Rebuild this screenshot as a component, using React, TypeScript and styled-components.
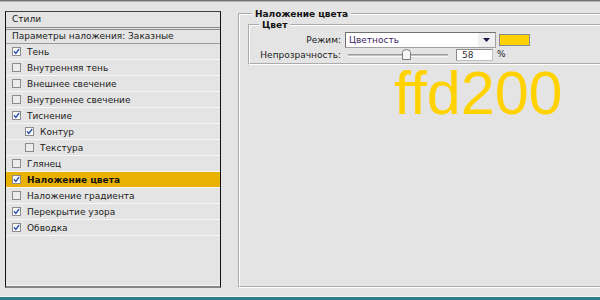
import React from "react";
import styled, { createGlobalStyle } from "styled-components";

const GlobalStyle = createGlobalStyle`
  html, body {
    margin: 0;
    padding: 0;
    background: #e4e4e4;
  }
  body {
    font-family: "DejaVu Sans", Verdana, sans-serif;
    font-size: 9px;
    color: #1c1c1c;
  }
`;

const Page = styled.div`
  width: 600px;
  height: 300px;
  overflow: hidden;
  display: flex;
  flex-direction: column;
  background: #e4e4e4;
`;

const TopRule = styled.div`
  height: 1px;
  border-top: 1px solid #707070;
  background: #b4b4b4;
`;

const Main = styled.div`
  flex: 1;
  min-height: 0;
  display: flex;
  padding: 6px 0 8px 5px;
`;

const BottomRule = styled.div`
  height: 3px;
  border-top: 1px solid #f4f4f4;
  background: #317f89;
`;

/* left: styles list */
const StylesPanel = styled.div`
  width: 214px;
  margin-top: 3px;
  display: flex;
  flex-direction: column;
  border: 1px solid #111;
  border-top-color: #404040;
  border-bottom: 2px solid #858585;
  box-shadow: inset 0 -1px 0 #f6f6f6;
`;

const PanelHeader = styled.div<{ $double?: boolean }>`
  height: ${(p) => (p.$double ? 15 : 13)}px;
  line-height: ${(p) => (p.$double ? 15 : 13)}px;
  padding-left: 6px;
  white-space: nowrap;
  border-bottom: ${(p) => (p.$double ? "3px double #8a8a8a" : "1px solid #9a9a9a")};
`;

const Row = styled.div<{ $active?: boolean; $indent?: boolean }>`
  height: 15px;
  display: flex;
  align-items: center;
  gap: 6px;
  padding-left: ${(p) => (p.$indent ? 19 : 6)}px;
  border-bottom: 1px solid #f7f7f7;
  white-space: nowrap;
  background: ${(p) => (p.$active ? "#e9b200" : "transparent")};
  font-weight: ${(p) => (p.$active ? "bold" : "normal")};
  color: ${(p) => (p.$active ? "#111" : "#1c1c1c")};
`;

const CheckSvg = styled.svg`
  flex: none;
  display: block;
`;

const Check = ({ on }: { on: boolean }) => (
  <CheckSvg width="9" height="9" viewBox="0 0 9 9">
    <rect x="0.5" y="0.5" width="8" height="8" fill={on ? "#fdfdfd" : "#ececec"} stroke="#8c8c8c" />
    {on && <path d="M2 4.3 L3.8 6.4 L7.2 2" fill="none" stroke="#2f4fa8" strokeWidth="1.4" />}
  </CheckSvg>
);

/* right: colour overlay group */
const Group = styled.fieldset`
  flex: 1;
  min-width: 0;
  margin: 0 -4px 0 17px;
  padding: 0 0 0 8px;
  border: 2px groove #ffffff;
  border-right: none;
`;

const SubGroup = styled.fieldset`
  min-width: 0;
  margin: -1px -4px 0 0;
  padding: 1px 0 1px 8px;
  border: 2px groove #ffffff;
  border-right: none;
`;

const Legend = styled.legend<{ $inset: number }>`
  font-weight: bold;
  line-height: 12px;
  padding: 0 3px;
  margin-left: ${(p) => p.$inset}px;
  color: #111;
`;

const Form = styled.div`
  display: grid;
  grid-template-columns: 83px auto;
  column-gap: 4px;
  align-items: center;
`;

const Label = styled.span`
  text-align: right;
  white-space: nowrap;
`;

const ModeRow = styled.div`
  height: 16px;
  display: flex;
  align-items: center;
  gap: 3px;
`;

const Select = styled.div`
  box-sizing: border-box;
  width: 151px;
  height: 16px;
  display: flex;
  align-items: stretch;
  background: #fff;
  border: 1px solid #707070;
  border-right-color: #a0a0a0;
  border-bottom-color: #a0a0a0;
  color: #3b2461;
`;

const SelectText = styled.span`
  flex: 1;
  padding-left: 3px;
  line-height: 14px;
`;

const DropButton = styled.span`
  width: 17px;
  display: flex;
  align-items: center;
  justify-content: center;
  background: #efefef;
`;

const Swatch = styled.div`
  box-sizing: border-box;
  width: 31px;
  height: 12px;
  background: #ffd200;
  border: 1px solid #8a8a8a;
`;

const OpacityRow = styled.div`
  height: 14px;
  display: flex;
  align-items: center;
`;

const Slider = styled.div`
  position: relative;
  width: 108px;
  height: 14px;
  display: flex;
  align-items: center;
`;

const Track = styled.div`
  margin-left: 3px;
  width: 100px;
  height: 1px;
  border-top: 1px solid #9a9a9a;
  border-bottom: 1px solid #fafafa;
  background: #c4c4c4;
`;

const Thumb = styled.svg`
  position: absolute;
  top: 1px;
  display: block;
`;

const NumberBox = styled.div`
  box-sizing: border-box;
  width: 37px;
  height: 12px;
  margin-left: 3px;
  padding-left: 5px;
  line-height: 10px;
  background: #fff;
  border: 1px solid #8c8c8c;
  border-right-color: #c0c0c0;
  border-bottom-color: #c0c0c0;
  color: #333;
`;

const Unit = styled.span`
  margin: -3px 0 0 4px;
`;

const HexLabel = styled.div`
  margin: -2px 0 0 146px;
  font-family: "Liberation Sans", Arial, sans-serif;
  font-size: 61px;
  line-height: 61px;
  color: #ffd200;
`;

const effects = [
  { name: "Тень", on: true },
  { name: "Внутренняя тень", on: false },
  { name: "Внешнее свечение", on: false },
  { name: "Внутреннее свечение", on: false },
  { name: "Тиснение", on: true },
  { name: "Контур", on: true, indent: true },
  { name: "Текстура", on: false, indent: true },
  { name: "Глянец", on: false },
  { name: "Наложение цвета", on: true, active: true },
  { name: "Наложение градиента", on: false },
  { name: "Перекрытие узора", on: true },
  { name: "Обводка", on: true },
];

const opacity = 58;

export default function App() {
  return (
    <>
      <GlobalStyle />
      <Page>
        <TopRule />
        <Main>
          <StylesPanel>
            <PanelHeader $double>Стили</PanelHeader>
            <PanelHeader>Параметры наложения: Заказные</PanelHeader>
            {effects.map((e) => (
              <Row key={e.name} $active={e.active} $indent={e.indent}>
                <Check on={e.on} />
                {e.name}
              </Row>
            ))}
          </StylesPanel>

          <Group>
            <Legend $inset={4}>Наложение цвета</Legend>
            <SubGroup>
              <Legend $inset={1}>Цвет</Legend>
              <Form>
                <Label>Режим:</Label>
                <ModeRow>
                  <Select>
                    <SelectText>Цветность</SelectText>
                    <DropButton>
                      <svg width="7" height="4" viewBox="0 0 7 4">
                        <path d="M0 0 H7 L3.5 4 Z" fill="#1a1a48" />
                      </svg>
                    </DropButton>
                  </Select>
                  <Swatch />
                </ModeRow>
                <Label>Непрозрачность:</Label>
                <OpacityRow>
                  <Slider>
                    <Track />
                    <Thumb
                      width="9"
                      height="11"
                      viewBox="0 0 9 11"
                      style={{ left: 3 + opacity - 4 }}
                    >
                      <path
                        d="M0.5 10.5 V3.5 Q0.5 0.5 4.5 0.5 Q8.5 0.5 8.5 3.5 V10.5 Z"
                        fill="#f6f6f6"
                        stroke="#7a7a7a"
                      />
                    </Thumb>
                  </Slider>
                  <NumberBox>{opacity}</NumberBox>
                  <Unit>%</Unit>
                </OpacityRow>
              </Form>
            </SubGroup>
            <HexLabel>ffd200</HexLabel>
          </Group>
        </Main>
        <BottomRule />
      </Page>
    </>
  );
}
